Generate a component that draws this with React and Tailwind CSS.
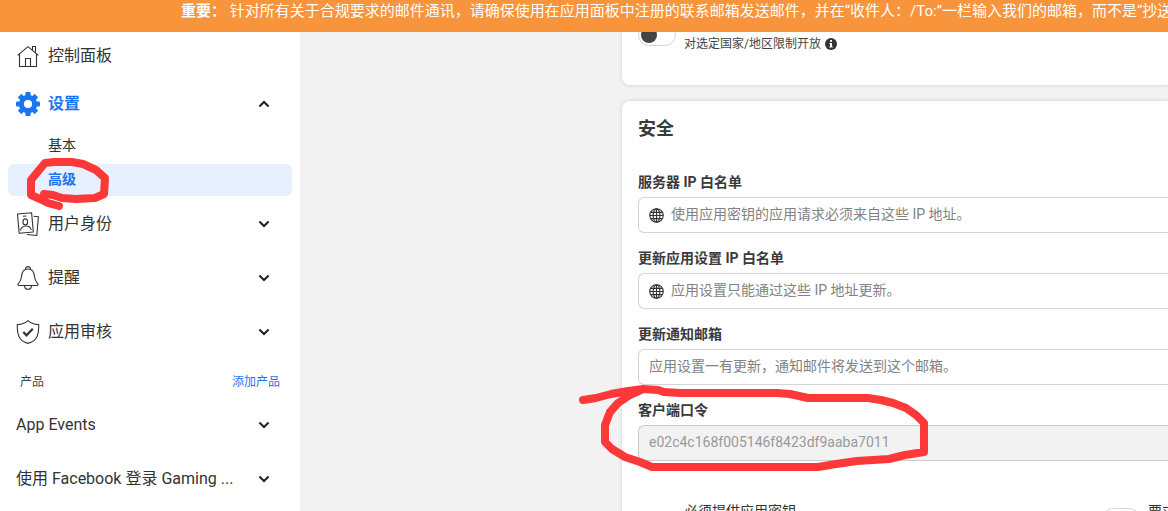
import React from "react";

const Chevron = ({ up }) => (
  <svg viewBox="0 0 12 8" className={up ? "h-2 w-3 rotate-180" : "h-2 w-3"} fill="none" stroke="#222" strokeWidth="2" aria-hidden="true">
    <path d="M1.4 1.5 6 6 10.6 1.5" />
  </svg>
);

const HomeIcon = () => (
  <svg viewBox="0 0 24 24" className="size-6" fill="none" stroke="#333" strokeWidth="1.1" aria-hidden="true">
    <path d="M1.6 11.4 12 2.6l10.4 8.8M3.500 10v12.5h17V10M16.500 6.200V2.500h3v6.400M9.500 22.500v-8h5v8" />
  </svg>
);

const GearIcon = () => (
  <svg viewBox="0 0 24 24" className="size-6" aria-hidden="true">
    <g fill="#1b74f0">
      <rect x="9.4" y="0" width="5.2" height="24" rx="1" />
      <rect x="9.4" y="0" width="5.2" height="24" rx="1" transform="rotate(45 12 12)" />
      <rect x="9.4" y="0" width="5.2" height="24" rx="1" transform="rotate(90 12 12)" />
      <rect x="9.4" y="0" width="5.2" height="24" rx="1" transform="rotate(135 12 12)" />
      <circle cx="12" cy="12" r="9.2" />
    </g>
    <circle cx="12" cy="12" r="4.1" fill="#fff" />
  </svg>
);

const RolesIcon = () => (
  <svg viewBox="0 0 24 24" className="size-6" fill="none" stroke="#333" strokeWidth="1.1" strokeLinejoin="round" aria-hidden="true">
    <path d="M1.5 2 15.6.8 17.3 20 3.2 21.2ZM17.6 4.2l4.8.5-1.6 18.8L11 22.5M7 4.3l3.4-.3M4.500 18.500c.4-3.200 2.600-4.300 5.200-4.500 2.700-.1 4.800.8 5.500 4" />
    <ellipse cx="9.3" cy="9.9" rx="2.3" ry="3" />
  </svg>
);

const BellIcon = () => (
  <svg viewBox="0 0 24 24" className="size-6" fill="none" stroke="#333" strokeWidth="1.1" strokeLinejoin="round" aria-hidden="true">
    <path d="M3.200 19.500c-1.300 0-1.600-1.300-.7-2.200C4.300 15.500 5.300 14.300 5.500 10.500 5.800 6 8.200 3 12 3s6.200 3 6.500 7.500c.2 3.800 1.200 5 3 6.800.9.9.6 2.200-.7 2.200ZM9.500 3.300C9.300 1.600 10.300.6 12 .6s2.700 1 2.500 2.700M8.500 19.600c.2 2.400 1.600 3.700 3.500 3.700s3.300-1.300 3.500-3.700" />
  </svg>
);

const ShieldIcon = () => (
  <svg viewBox="0 0 24 24" className="size-6" fill="none" stroke="#333" strokeWidth="1.1" strokeLinejoin="round" aria-hidden="true">
    <path d="M12 .6C9.500 2.900 5.500 4.500 1.300 4.600c-.4 9 1.200 16.400 10.700 18.800 9.500-2.400 11.100-9.800 10.700-18.800C18.500 4.500 14.500 2.900 12 .6Z" />
    <path d="m7.3 12 3.2 3.3 6.300-6.500" strokeWidth="2.2" strokeLinejoin="miter" />
  </svg>
);

const GlobeIcon = () => (
  <svg viewBox="0 0 16 16" className="size-[15px] shrink-0" fill="none" stroke="#333" strokeWidth="1.2" aria-hidden="true">
    <circle cx="8" cy="8" r="7.2" />
    <ellipse cx="8" cy="8" rx="3.6" ry="7.2" />
    <path d="M8 1v14M1 8h14M2 4.700h12M2 11.300h12" />
  </svg>
);

const InfoIcon = () => (
  <svg viewBox="0 0 12 12" className="size-3" aria-hidden="true">
    <circle cx="6" cy="6" r="6" fill="#333" />
    <path d="M5 2h2v1.800H5ZM4.300 4.900H7V8.500h.8V9.600H4.300V8.500H5V6h-.7Z" fill="#fff" />
  </svg>
);

const NavItem = ({ icon, children, state = "closed" }) => (
  <button type="button" aria-expanded={state === "open"} className="flex h-12 w-full items-center gap-2 pl-4 pr-[30px] text-left">
    {icon}
    <span className={state === "open" ? "flex-1 truncate font-bold text-[#1b74f0]" : "flex-1 truncate text-[#333]"}>{children}</span>
    {state !== "none" && <Chevron up={state === "open"} />}
  </button>
);

const Toggle = ({ label }) => (
  <label className="block h-[22px] w-[38px] shrink-0 cursor-pointer rounded-full border border-[#d5d5d5] bg-white p-0.5">
    <input type="checkbox" className="peer sr-only" aria-label={label} />
    <span className="block size-4 rounded-full bg-[#444] peer-checked:ml-4" />
  </label>
);

const Field = ({ id, label, icon, ...input }) => (
  <div className="flex flex-col gap-[5px]">
    <label htmlFor={id} className="text-sm font-bold text-[#3a3a3a]">{label}</label>
    <div className={input.disabled
      ? "flex h-9 items-center gap-[7px] rounded-l-md border border-r-0 border-[#ccc] bg-[#f2f2f2] px-2.5"
      : "flex h-9 items-center gap-[7px] rounded-l-md border border-r-0 border-[#d5d5d5] bg-white px-2.5"}>
      {icon}
      <input id={id} {...input} className="min-w-0 flex-1 bg-transparent pb-0.5 text-sm text-[#999] outline-none placeholder:text-[#828282]" />
    </div>
  </div>
);

export default function App() {
  return (
    <div className="flex h-screen flex-col overflow-hidden bg-[#f2f2f2] font-['Roboto','Noto_Sans_CJK_SC',sans-serif]">
      <header className="h-8 shrink-0 overflow-hidden whitespace-nowrap bg-[#f8943b] pl-[181px] text-[15px] leading-[22px] text-white">
        <strong>重要：</strong> 针对所有关于合规要求的邮件通讯，请确保使用在应用面板中注册的联系邮箱发送邮件，并在“收件人：/To:”一栏输入我们的邮箱，而不是“抄送
      </header>

      <div className="flex min-h-0 flex-1">
        <nav className="w-[300px] shrink-0 overflow-hidden bg-white">
          <NavItem icon={<HomeIcon />} state="none">控制面板</NavItem>
          <NavItem icon={<GearIcon />} state="open">设置</NavItem>
          <div className="flex flex-col gap-0.5 px-2 pb-1 pt-0.5 text-sm">
            <a href="#basic" className="flex h-8 items-center rounded-md pb-0.5 pl-10 text-[#333]">基本</a>
            <a href="#advanced" className="relative flex h-8 items-center rounded-md bg-[#e7f0ff] pb-0.5 pl-10 font-bold text-[#1b74f0]">
              高级
              <svg viewBox="26 156 84 56" className="absolute -top-2 left-[18px] h-14 w-[84px]" fill="none" stroke="#fd3838" strokeWidth="8" strokeLinecap="round" strokeLinejoin="round" aria-hidden="true">
                <path d="M44 194 53 195 62 198 75 199 95 198 104 194 105 178 96 170 83 164 72 162 54 162 45 163 40 169 31 180 31 195 40 199 48 203 59 206" />
              </svg>
            </a>
          </div>
          <div className="flex flex-col gap-1.5">
            <NavItem icon={<RolesIcon />}>用户身份</NavItem>
            <NavItem icon={<BellIcon />}>提醒</NavItem>
            <NavItem icon={<ShieldIcon />}>应用审核</NavItem>
          </div>
          <div className="flex items-center justify-between px-5 pb-3 pt-[18px] text-xs leading-4">
            <span className="text-[#444]">产品</span>
            <a href="#add" className="text-[#1b74f0]">添加产品</a>
          </div>
          <div className="-mt-px flex flex-col gap-1.5">
            <NavItem>App Events</NavItem>
            <NavItem>使用 Facebook 登录 Gaming ...</NavItem>
          </div>
        </nav>

        <main className="flex min-w-0 flex-1 flex-col gap-4 overflow-hidden pl-[322px]">
          <section className="h-[53px] shrink-0 rounded-bl-lg bg-white pl-4 shadow-[0_0_4px_rgba(0,0,0,0.15)]">
            <div className="-mt-2 flex gap-2">
              <Toggle label="对选定国家/地区限制开放" />
              <p className="flex items-center gap-1 pt-3 text-xs text-[#444]">
                对选定国家/地区限制开放
                <InfoIcon />
              </p>
            </div>
          </section>

          <section className="relative flex-1 rounded-tl-lg bg-white pl-4 pt-3.5 shadow-[0_0_4px_rgba(0,0,0,0.15)]">
            <h2 className="text-lg font-bold text-[#3a3a3a]">安全</h2>
            <div className="mt-[29px] flex flex-col gap-[15px]">
              <Field id="server-ip" label="服务器 IP 白名单" icon={<GlobeIcon />} placeholder="使用应用密钥的应用请求必须来自这些 IP 地址。" />
              <Field id="update-ip" label="更新应用设置 IP 白名单" icon={<GlobeIcon />} placeholder="应用设置只能通过这些 IP 地址更新。" />
              <Field id="email" label="更新通知邮箱" placeholder="应用设置一有更新，通知邮件将发送到这个邮箱。" />
              <Field id="token" label="客户端口令" defaultValue="e02c4c168f005146f8423df9aaba7011" disabled />
            </div>
            <div className="mt-10 flex overflow-hidden whitespace-nowrap text-sm text-[#333]">
              <span className="w-[464px] shrink-0 pl-[46px]">必须提供应用密钥</span>
              <div className="flex shrink-0 gap-2">
                <div className="pt-[7px]"><Toggle label="要求" /></div>
                <span>要求</span>
              </div>
            </div>
            <svg viewBox="578 384 352 90" className="pointer-events-none absolute -left-11 top-[283px] h-[90px] w-[352px]" fill="none" stroke="#fd3838" strokeWidth="8" strokeLinecap="round" strokeLinejoin="round" aria-hidden="true">
              <path d="M583 400 596 398 611 394 628 391 643 389 658 390 664 392 680 393 777 393 790 394 808 398 868 398 881 400 893 403 906 408 916 415 924 423 924 452 905 455 889 459 857 461 836 464 818 467 652 467 640 462 625 457 612 449 605 442 605 425 610 412 618 403 630 395 643 389" />
            </svg>
          </section>
        </main>
      </div>
    </div>
  );
}
